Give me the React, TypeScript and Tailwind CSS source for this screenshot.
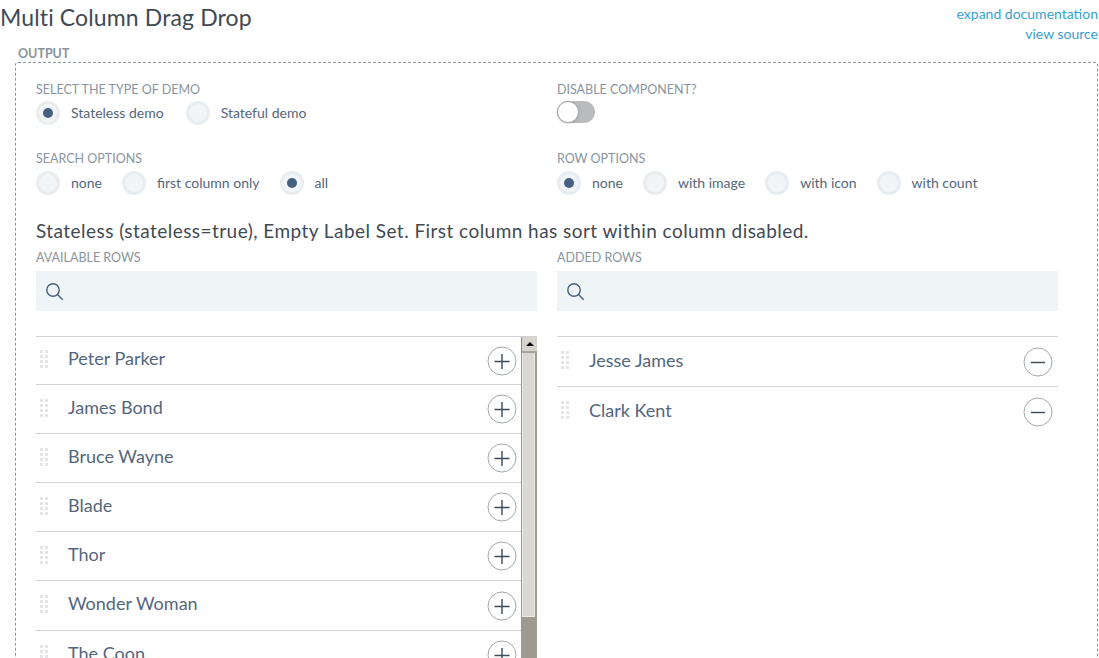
const font = { fontFamily: "Lato, sans-serif" };

const available = ["Peter Parker", "James Bond", "Bruce Wayne", "Blade", "Thor", "Wonder Woman", "The Coon"];
const added = ["Jesse James", "Clark Kent"];

function Label({ children }: { children: string }) {
  return <div className="h-[14px] text-[12.5px] leading-[14px] text-[#8a949e] uppercase">{children}</div>;
}

function Radio({ label, checked }: { label: string; checked?: boolean }) {
  return (
    <div className="flex items-center">
      <span className="flex h-6 w-6 items-center justify-center rounded-full border-[3px] border-[#e9edf0] bg-[#f2f5f8]">
        {checked && <span className="h-[10px] w-[10px] rounded-full bg-[#46607f]" />}
      </span>
      <span className="ml-[11px] text-sm text-[#54667d]">{label}</span>
    </div>
  );
}

function SearchBox() {
  return (
    <div className="flex h-10 items-center bg-[#eff4f7] pl-[9px]">
      <svg width="19" height="19" viewBox="0 0 19 19" fill="none" stroke="#46607f" strokeWidth="1.4">
        <circle cx="8" cy="8" r="6.2" />
        <path d="M12.5 12.5l5.2 5.2" />
      </svg>
    </div>
  );
}

function Grip() {
  return (
    <div className="-mt-[3px] grid w-[8px] grid-cols-2 gap-x-[2px] gap-y-[2px]">
      {Array.from({ length: 8 }).map((_, i) => (
        <span key={i} className="h-[3px] w-[3px] bg-[#e3e5e8]" />
      ))}
    </div>
  );
}

function RowButton({ minus }: { minus?: boolean }) {
  return (
    <svg width="30" height="30" viewBox="0 0 30 30" fill="none" className={minus ? "mr-px mt-px shrink-0" : "shrink-0"}>
      <circle cx="15" cy="15" r="14" stroke="#a3a9ad" />
      <path d={minus ? "M8 15.5h14" : "M7.5 15.5h15M15 8v15"} stroke="#3d4a58" strokeWidth="1.4" />
    </svg>
  );
}

function Row({ name, minus, height }: { name: string; minus?: boolean; height: string }) {
  return (
    <div className={`flex items-center border-t border-[#d0d3d5] pl-[4px] pr-[4px] ${height}`}>
      <Grip />
      <span className={`ml-[20px] flex-1 text-[18px] text-[#54667d] ${minus ? "-mt-[2px]" : "-mt-[4px]"}`}>{name}</span>
      <RowButton minus={minus} />
    </div>
  );
}

function Scrollbar() {
  return (
    <div className="flex w-4 shrink-0 flex-col border-t border-[#d0d3d5] bg-[#9e9a8f]">
      <div className="flex h-[16px] items-center justify-center border-b-2 border-[#a8a498] border-l border-l-[#8f8b80] bg-[#d6d4cc]">
        <span className="h-0 w-0 border-x-[4px] border-b-[4px] border-x-transparent border-b-black" />
      </div>
      <div className="ml-[1px] mr-[2px] h-[264px] border-x border-b border-[#ebeae5] bg-[#d9d8d2]" />
    </div>
  );
}

export default function App() {
  return (
    <div className="h-[658px] w-[1099px] overflow-hidden bg-white" style={font}>
      <div className="flex h-[44px] items-start justify-between">
        <h1 className="pt-[2px] text-[23px] leading-[30px] tracking-[0.13px] text-[#3f4a54]">Multi Column Drag Drop</h1>
        <div className="pr-px pt-[4px] text-right text-sm leading-5 text-[#3aa0d0]">
          <div>expand documentation</div>
          <div>view source</div>
        </div>
      </div>
      <div className="ml-[18px] mt-[3px] h-[14px] text-[12.5px] font-bold leading-[14px] text-[#8a949e]">OUTPUT</div>
      <div className="ml-[15px] mr-px mt-[1px] h-[600px] rounded-[3px] border border-dashed border-[#8f969c] px-5 pt-5">
        <div className="grid grid-cols-[521px_1fr]">
          <div>
            <Label>Select the type of demo</Label>
            <div className="mt-[4px] flex gap-[22px]">
              <Radio label="Stateless demo" checked />
              <Radio label="Stateful demo" />
            </div>
          </div>
          <div>
            <Label>Disable component?</Label>
            <div className="relative mt-[4px] h-[22px] w-[38px] rounded-full bg-[#b9bbbd]">
              <span className="absolute left-0 top-0 h-[22px] w-[22px] rounded-full border border-[#a9abad] bg-white shadow" />
            </div>
          </div>
        </div>
        <div className="mt-[27px] grid grid-cols-[521px_1fr]">
          <div>
            <Label>Search options</Label>
            <div className="mt-[5px] flex gap-5">
              <Radio label="none" />
              <Radio label="first column only" />
              <Radio label="all" checked />
            </div>
          </div>
          <div>
            <Label>Row options</Label>
            <div className="mt-[5px] flex gap-5">
              <Radio label="none" checked />
              <Radio label="with image" />
              <Radio label="with icon" />
              <Radio label="with count" />
            </div>
          </div>
        </div>
        <p className="mt-[24px] text-[19px] leading-6 tracking-[0.45px] text-[#3f4a54]">
          Stateless (stateless=true), Empty Label Set. First column has sort within column disabled.
        </p>
        <div className="mt-2 grid grid-cols-[501px_501px] gap-x-5">
          <div>
            <Label>Available rows</Label>
            <div className="mt-[6px]"><SearchBox /></div>
            <div className="mt-[25px] flex">
              <div className="min-w-0 flex-1">
                {available.map((name, i) => (
                  <Row key={name} name={name} height={i === 0 ? "h-[48px]" : i === 5 ? "h-[50px]" : "h-[49px]"} />
                ))}
              </div>
              <Scrollbar />
            </div>
          </div>
          <div>
            <Label>Added rows</Label>
            <div className="mt-[6px]"><SearchBox /></div>
            <div className="mt-[25px]">
              {added.map((name) => (
                <Row key={name} name={name} minus height="h-[50px]" />
              ))}
            </div>
          </div>
        </div>
      </div>
    </div>
  );
}
